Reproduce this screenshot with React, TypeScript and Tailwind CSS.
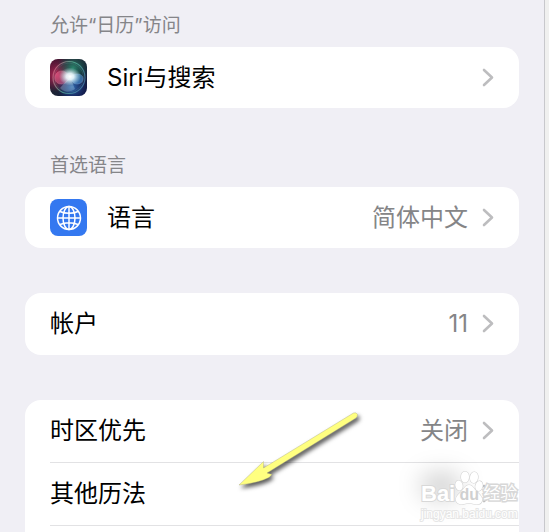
import type { ReactNode } from "react";
import { clsx } from "clsx";

interface RowProps {
  label: string;
  value?: string;
  icon?: ReactNode;
  divided?: boolean;
}

function Chevron() {
  return (
    <svg
      className="ml-3.5 h-5 w-3 shrink-0"
      viewBox="0 0 12 20"
      fill="none"
      stroke="#bdbdbf"
      strokeWidth="2.6"
      strokeLinecap="round"
      strokeLinejoin="round"
      aria-hidden
    >
      <path d="M2 2 10 9.500 2 17" />
    </svg>
  );
}

function SiriIcon() {
  return (
    <svg className="size-[37px] shrink-0" viewBox="0 0 37 37" aria-hidden>
      <defs>
        <linearGradient id="siri-bg" x1="0" y1="0" x2="1" y2="1">
          <stop offset="0" stopColor="#4a1230" />
          <stop offset="0.5" stopColor="#1c2434" />
          <stop offset="1" stopColor="#101848" />
        </linearGradient>
        <radialGradient id="siri-red">
          <stop offset="0" stopColor="#c82c5c" stopOpacity="0.95" />
          <stop offset="1" stopColor="#a01848" stopOpacity="0" />
        </radialGradient>
        <radialGradient id="siri-green">
          <stop offset="0" stopColor="#2c8a70" stopOpacity="0.95" />
          <stop offset="1" stopColor="#106050" stopOpacity="0" />
        </radialGradient>
        <radialGradient id="siri-blue">
          <stop offset="0" stopColor="#3474b8" stopOpacity="0.95" />
          <stop offset="1" stopColor="#1838a0" stopOpacity="0" />
        </radialGradient>
        <radialGradient id="siri-glow">
          <stop offset="0" stopColor="#fff" />
          <stop offset="0.35" stopColor="#effcff" stopOpacity="0.9" />
          <stop offset="1" stopColor="#bfe8f0" stopOpacity="0" />
        </radialGradient>
        <linearGradient id="siri-ring" x1="0" y1="0.2" x2="1" y2="0.6">
          <stop offset="0" stopColor="#d86888" />
          <stop offset="0.5" stopColor="#5cc0a0" />
          <stop offset="1" stopColor="#4c88b0" />
        </linearGradient>
        <clipPath id="siri-clip">
          <rect width="37" height="37" rx="8" />
        </clipPath>
      </defs>
      <g clipPath="url(#siri-clip)">
        <rect width="37" height="37" fill="url(#siri-bg)" />
        <circle cx="7" cy="16" r="17" fill="url(#siri-red)" />
        <circle cx="23" cy="9" r="16" fill="url(#siri-green)" />
        <circle cx="22" cy="28" r="15" fill="url(#siri-blue)" />
        <circle cx="19" cy="18.5" r="16" fill="none" stroke="url(#siri-ring)" strokeWidth="1.2" opacity="0.7" />
        <circle cx="19" cy="18.5" r="14.5" fill="none" stroke="#6cb0ac" strokeWidth="0.5" opacity="0.4" />
        <path
          d="M5 19c0-4 3-7 7-7 4 0 6 4 9 6-3 3-5 7-9 7s-7-2-7-6Z"
          fill="#e06890"
          stroke="#f8a0b8"
          strokeWidth="0.6"
          opacity="0.5"
        />
        <path
          d="M19 18c3-1 5-3 8-3 4 0 6 2 6 5s-3 5-6 5c-4 0-5-4-8-7Z"
          fill="#4c94d4"
          stroke="#90c0f0"
          strokeWidth="0.6"
          opacity="0.6"
        />
        <path d="m10 29 10-11 5 12c-4 3-10 4-15-1Z" fill="#a8c8e0" opacity="0.35" />
        <ellipse cx="20" cy="17.500" rx="11" ry="9" fill="url(#siri-glow)" />
      </g>
    </svg>
  );
}

function GlobeIcon() {
  return (
    <span className="flex size-[37px] shrink-0 items-center justify-center rounded-lg bg-[#3478f0]">
      <svg
        className="size-[26px]"
        viewBox="0 0 26 26"
        fill="none"
        stroke="#fff"
        strokeWidth="1.5"
        aria-hidden
      >
        <circle cx="13" cy="13" r="11.5" />
        <ellipse cx="13" cy="13" rx="6" ry="11.5" />
        <path d="M13 1.5v23M1.5 13h23M4 6.5c5 2.4 13 2.4 18 0M4 19.5c5-2.4 13-2.4 18 0" />
      </svg>
    </span>
  );
}

function Row({ label, value, icon, divided }: RowProps) {
  return (
    <li className="pl-[25px]">
      <button
        type="button"
        className={clsx(
          "flex w-full items-center pr-[25px] text-left text-2xl/[37px]",
          icon ? "py-3" : "pt-3 pb-[13px]",
          divided && "border-b border-[#e2e2e4] pb-3",
        )}
      >
        {icon && <span className="mr-5">{icon}</span>}
        <span className="flex-1 text-black">{label}</span>
        {value && <span className="text-[#858587]">{value}</span>}
        <Chevron />
      </button>
    </li>
  );
}

function Section({
  title,
  children,
  open,
}: {
  title?: string;
  children: ReactNode;
  open?: boolean;
}) {
  return (
    <section className={clsx(open && "flex flex-1 flex-col")}>
      {title && (
        <h2 className="mb-2 pl-[25px] text-[19px]/[26px] text-[#858589]">{title}</h2>
      )}
      <ul className={clsx("bg-white", open ? "flex-1 rounded-t-2xl" : "rounded-2xl")}>
        {children}
      </ul>
    </section>
  );
}

function Watermark() {
  return (
    <div className="pointer-events-none absolute right-0 bottom-2.5 w-[98px] text-white">
      <div className="absolute top-1 left-0 h-6 w-10 rounded-full bg-black/20 blur-md" />
      <div className="relative flex h-9 items-end font-['Liberation_Sans','Noto_Sans_CJK_SC',sans-serif] [paint-order:stroke_fill]">
        <span className="text-[22px]/[24px] font-bold [-webkit-text-stroke:2px_#d8d8d8]">
          Bai
        </span>
        <span className="relative flex h-9 w-7 shrink-0 items-end justify-center">
          <svg
            className="absolute inset-0 size-full"
            viewBox="0 0 28 36"
            fill="#fff"
            stroke="#d4d4d4"
            strokeWidth="1.2"
            aria-hidden
          >
            <ellipse cx="4" cy="15.500" rx="3.600" ry="5" transform="rotate(-12 4 15.5)" />
            <ellipse cx="10" cy="7" rx="4" ry="5.500" />
            <ellipse cx="19" cy="7.500" rx="4" ry="5.500" transform="rotate(8 19 7.5)" />
            <ellipse cx="24" cy="16" rx="3.600" ry="5" transform="rotate(14 24 16)" />
            <path d="M14 15c-4 0-5 4-8 7-3 3-6 5-5 9 1 3 5 4 8 3 3-1 7-1 10 0 4 1 7 0 8-3 1-4-2-6-5-9-3-3-4-7-8-7Z" />
          </svg>
          <span className="relative text-base/[22px] font-bold text-[#d0d0d0]">du</span>
        </span>
        <span className="shrink-0 text-[17px]/[24px] [-webkit-text-stroke:3px_#d8d8d8]">
          经验
        </span>
      </div>
      <div className="relative font-['Liberation_Sans',sans-serif] text-xs/4 whitespace-nowrap [paint-order:stroke_fill] [-webkit-text-stroke:2px_#e6e6e6]">
        jingyan.baidu.com
      </div>
    </div>
  );
}

function PointerArrow() {
  return (
    <svg
      className="pointer-events-none absolute top-[408px] left-[234px] h-[88px] w-[136px] drop-shadow-[2px_3px_2px_rgba(0,0,0,0.65)]"
      viewBox="0 0 136 88"
      aria-hidden
    >
      <path
        d="M5 77 29.500 53.500v6.500L119.500 5q3-1 4 1.500 0 2-1.500 3.500L33 65l5 1.500-3 3Q24 75 5 77Z"
        fill="#ffff80"
        stroke="#a8a878"
        strokeWidth="0.4"
      />
    </svg>
  );
}

export default function App() {
  return (
    <div className="relative flex h-screen overflow-hidden bg-[#f0eff5] font-['Inter','Noto_Sans_CJK_SC',sans-serif]">
      <main className="relative flex flex-1 flex-col gap-[45px] px-[25px] pt-[13px]">
        <Section title="允许“日历”访问">
          <Row label="Siri与搜索" icon={<SiriIcon />} />
        </Section>
        <Section title="首选语言">
          <Row label="语言" value="简体中文" icon={<GlobeIcon />} />
        </Section>
        <Section>
          <Row label="帐户" value="11" />
        </Section>
        <div className="relative flex flex-1 flex-col">
          <Section open>
            <Row label="时区优先" value="关闭" divided />
            <Row label="其他历法" divided />
          </Section>
          <Watermark />
        </div>
      </main>
      <PointerArrow />
      <div className="w-[5px] shrink-0 border-l border-[#c8c8cc] bg-[#f0f0ef]" />
    </div>
  );
}
